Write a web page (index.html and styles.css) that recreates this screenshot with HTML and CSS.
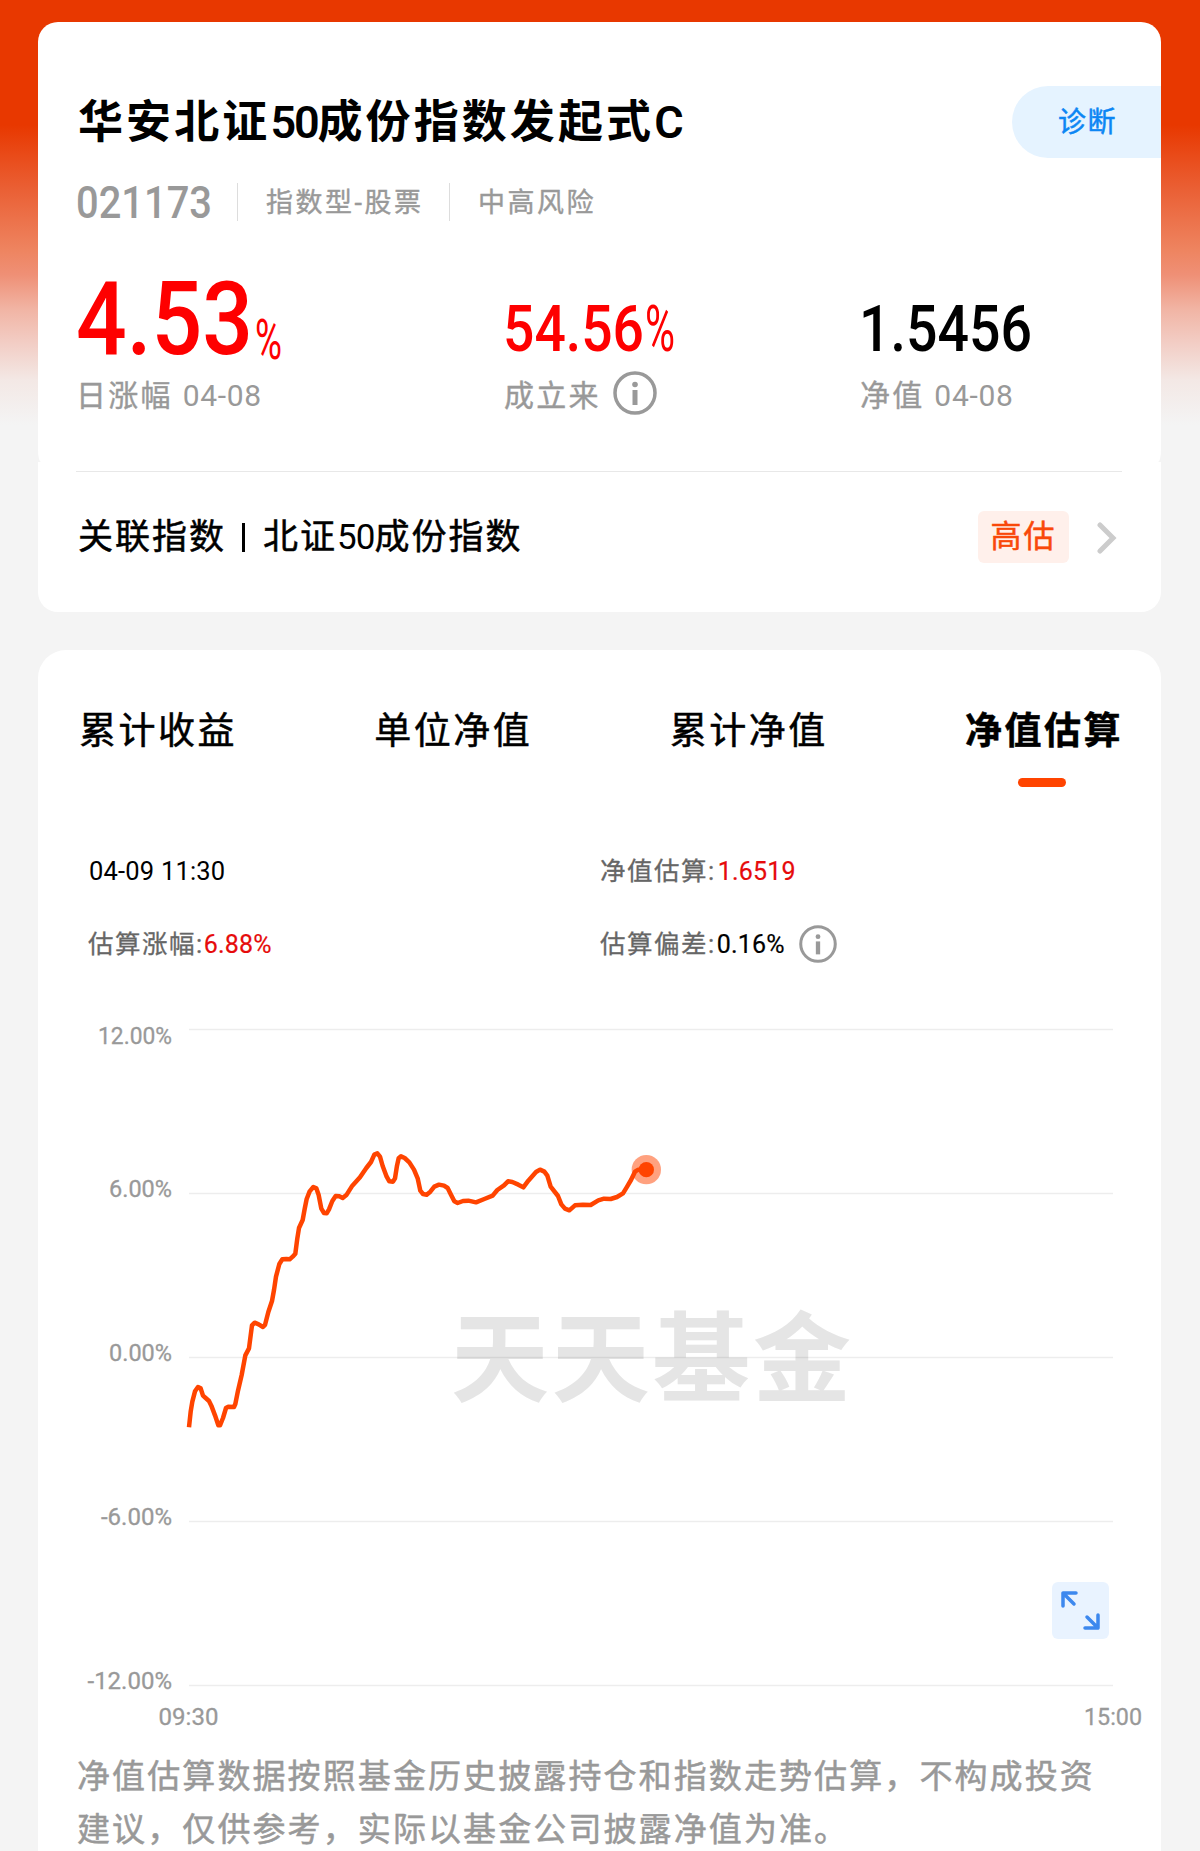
FILE: index.html
```html
<!DOCTYPE html>
<html lang="zh-CN">
<head>
  <meta charset="utf-8">
  <title>华安北证50成份指数发起式C</title>
  <link rel="stylesheet" href="styles.css">
</head>
<body>
  <div class="page">
    <div class="fund">
      <div class="fund-main">
        <div class="fund-head">
          <h1>华安北证<span class="num">50</span>成份指数发起式<span class="num">C</span></h1>
          <a class="diagnose">诊断</a>
        </div>
        <div class="tags">
          <svg class="code" width="136" height="38">
            <text x="0" y="35" textLength="136" lengthAdjust="spacingAndGlyphs">021173</text>
          </svg>
          <span class="tag type">指数型-股票</span>
          <span class="tag">中高风险</span>
        </div>
        <div class="stats">
          <div class="stat">
            <svg class="value red" width="220" height="90">
              <text class="big" x="0" y="80" textLength="177" lengthAdjust="spacingAndGlyphs">4.53</text>
              <text class="unit" x="179" y="85" textLength="27" lengthAdjust="spacingAndGlyphs">%</text>
            </svg>
            <div class="label"><span>日涨幅 <i>04-08</i></span></div>
          </div>
          <div class="stat">
            <svg class="value red" width="200" height="90">
              <text class="mid" x="-1" y="77" textLength="141" lengthAdjust="spacingAndGlyphs">54.56</text>
              <text class="mid thin" x="141" y="77" textLength="30" lengthAdjust="spacingAndGlyphs">%</text>
            </svg>
            <div class="label">
              <span>成立来</span>
              <svg class="info" width="44" height="44" viewBox="0 0 44 44">
                <circle cx="22" cy="22" r="20"/>
                <path d="M22 19v15"/>
                <circle class="dot" cx="22" cy="13.500" r="2.800"/>
              </svg>
            </div>
          </div>
          <div class="stat">
            <svg class="value" width="200" height="90">
              <text class="mid" x="-1" y="77" textLength="173" lengthAdjust="spacingAndGlyphs">1.5456</text>
            </svg>
            <div class="label"><span>净值 <i>04-08</i></span></div>
          </div>
        </div>
      </div>
      <div class="related">
        <div class="related-row">
          <span class="related-name">关联指数<b></b>北证<span class="num">50</span>成份指数</span>
          <span class="badge">高估</span>
          <svg class="arrow" width="20" height="34" viewBox="0 0 20 34">
            <path d="M3 4l13 13L3 30"/>
          </svg>
        </div>
      </div>
    </div>

    <div class="chart-card">
      <div class="tabs">
        <a>累计收益</a>
        <a>单位净值</a>
        <a>累计净值</a>
        <a class="active">净值估算</a>
      </div>
      <div class="estimate">
        <div class="time">04-09 11:30</div>
        <div><span>净值估算:</span><em class="first">1.6519</em></div>
        <div><span>估算涨幅:</span><em>6.88%</em></div>
        <div>
          <span>估算偏差:</span><em class="black">0.16%</em>
          <svg class="info" width="38" height="38" viewBox="0 0 44 44">
            <circle cx="22" cy="22" r="20"/>
            <path d="M22 19v15"/>
            <circle class="dot" cx="22" cy="13.500" r="2.800"/>
          </svg>
        </div>
      </div>

      <svg class="chart" width="1123" height="740" viewBox="38 1000 1123 740">
        <text class="watermark" x="451" y="1394" textLength="400">天天基金</text>
        <path class="grid" d="M189 1029.500H1113M189 1193.500H1113M189 1357.500H1113M189 1521.500H1113M189 1685.500H1113"/>
        <g class="axis" text-anchor="end">
          <text x="172" y="1044" textLength="74" lengthAdjust="spacingAndGlyphs">12.00%</text>
          <text x="172" y="1197" textLength="63" lengthAdjust="spacingAndGlyphs">6.00%</text>
          <text x="172" y="1361" textLength="63" lengthAdjust="spacingAndGlyphs">0.00%</text>
          <text x="172" y="1525">-6.00%</text>
          <text x="172" y="1689">-12.00%</text>
        </g>
        <g class="axis" text-anchor="middle">
          <text x="188.500" y="1725">09:30</text>
          <text x="1113" y="1725" textLength="58" lengthAdjust="spacingAndGlyphs">15:00</text>
        </g>
        <g transform="translate(170 1130) scale(.33333)">
          <path class="line" d="M57 892L62 845L67 815L75 784L84 771L92 775L99 797L107 804L117 813L124 827L135 856L145 886L150 886L159 864L168 834L175 830L192 831L196 822L204 782L215 735L226 676L237 655L246 586L254 578L266 583L279 591L285 585L295 546L306 513L312 480L318 440L328 402L337 388L349 387L359 388L368 380L376 371L382 325L387 294L398 270L404 237L410 207L419 184L430 171L439 175L446 195L454 236L462 249L470 250L477 238L487 213L497 198L508 199L518 204L530 194L547 167L570 142L589 114L603 96L613 74L622 70L630 80L638 108L650 140L658 154L669 155L675 145L681 107L686 85L693 79L704 84L718 97L732 119L743 145L751 182L759 192L770 194L781 185L793 170L807 164L822 167L833 174L843 194L853 214L863 219L879 213L895 212L918 217L943 207L968 197L982 180L1002 166L1014 154L1027 156L1045 164L1060 172L1075 152L1098 126L1110 119L1123 125L1132 137L1142 170L1164 198L1174 223L1185 236L1198 241L1215 226L1239 224L1262 225L1285 211L1302 206L1322 207L1341 201L1359 190L1370 172L1383 150L1395 125L1405 119L1429 119"/>
          <circle class="halo" cx="1429" cy="119" r="44"/>
          <circle class="point" cx="1429" cy="119" r="23"/>
        </g>
        <rect class="zoom-bg" x="1052" y="1582" width="57" height="57" rx="6"/>
        <path class="zoom-icon" d="M1076 1593H1063V1606M1063 1593L1074 1604M1098 1615V1628H1085M1098 1628L1087 1617"/>
      </svg>

      <p class="note">净值估算数据按照基金历史披露持仓和指数走势估算，不构成投资建议，仅供参考，实际以基金公司披露净值为准。</p>
    </div>
  </div>
</body>
</html>
```
FILE: styles.css
```css
body {
  margin: 0;
  background-color: #f4f4f4;
  font-family: Roboto, "Noto Sans CJK SC", sans-serif;
  color: #000;
}

.page {
  height: 1851px;
  box-sizing: border-box;
  padding: 22px 39px 0 38px;
  overflow: hidden;
  background: linear-gradient(#e83800 0, #e83800 125px, #ea6035 190px, #ee8460 250px, #ef9076 275px, #f1b5a5 310px, #f2cbc2 340px, #f3e8e5 380px, #f4f4f4 425px);
}

/* fund header */
.fund-main {
  height: 440px;
  box-sizing: border-box;
  padding: 64px 0 0 38px;
  border-radius: 20px 20px 3px 3px / 20px 20px 12px 12px;
  background-color: #fff;
}

.fund-head {
  display: flex;
  justify-content: space-between;
  height: 72px;
}

h1 {
  margin: 0 0 0 2px;
  font-size: 45px;
  line-height: 73px;
  font-weight: 700;
  letter-spacing: 3.1px;
}

h1 .num {
  font-weight: 600;
  letter-spacing: -2.2px;
}

.diagnose {
  width: 149px;
  box-sizing: border-box;
  padding: 2px 0 0 46px;
  border-radius: 36px 0 0 36px;
  background-color: #e5f3ff;
  color: #0c86f4;
  font-size: 28px;
  line-height: 70px;
  letter-spacing: 1.5px;
  -webkit-text-stroke: .5px;
}

.tags {
  display: flex;
  margin-top: 25px;
  height: 38px;
}

.code {
  overflow: visible;
}

.code text {
  font-size: 45px;
  font-weight: 500;
  fill: #999;
}

.tag {
  margin-left: 25px;
  padding-left: 28px;
  border-left: 1px solid #ddd;
  color: #999;
  font-size: 27px;
  line-height: 40px;
  letter-spacing: 2.5px;
  -webkit-text-stroke: .4px;
}

.type {
  width: 158px;
}

.stats {
  display: grid;
  grid-template-columns: 428px 356px 1fr;
  margin-top: 53px;
}

.value {
  display: block;
  overflow: visible;
}

.value text {
  font-weight: 500;
}

.red text {
  fill: #fe0000;
}

.value .big {
  font-size: 102px;
}

.value .unit {
  font-size: 55px;
  font-weight: 400;
}

.value .mid {
  font-size: 64px;
}

.value .thin {
  font-weight: 400;
}

.label {
  display: flex;
  gap: 12px;
  height: 48px;
  margin-top: 7px;
  color: #999;
  font-size: 30px;
  line-height: 50px;
  letter-spacing: 2.3px;
  -webkit-text-stroke: .4px;
}

.label i {
  font-style: normal;
  letter-spacing: .7px;
  -webkit-text-stroke: 0;
}

.info {
  fill: none;
  stroke: #999;
  stroke-width: 3.5;
}

.info path {
  stroke-width: 5;
}

.info .dot {
  fill: #999;
  stroke: none;
}

.related {
  height: 150px;
  box-sizing: border-box;
  padding: 9px 39px 0 38px;
  border-radius: 0 0 20px 20px;
  background-color: #fff;
}

.related-row {
  display: flex;
  align-items: center;
  height: 131px;
  border-top: 1px solid #e8e8e8;
}

.related-name {
  flex: 1;
  padding-left: 2px;
  font-size: 35px;
  line-height: 50px;
  letter-spacing: 2px;
  -webkit-text-stroke: .5px;
}

.related-name b {
  display: inline-block;
  width: 3px;
  height: 29px;
  margin: 0 18px 0 16px;
  background-color: #000;
  vertical-align: -3px;
}

.related-name .num {
  letter-spacing: -1px;
  -webkit-text-stroke: 0;
}

.badge {
  width: 91px;
  height: 52px;
  margin-bottom: 2px;
  border-radius: 6px;
  background-color: #fff0eb;
  color: #f9480a;
  font-size: 31px;
  line-height: 52px;
  letter-spacing: 2px;
  text-align: center;
  -webkit-text-stroke: .5px;
}

.arrow {
  margin: 0 5px 0 28px;
  fill: none;
  stroke: #ccc;
  stroke-width: 5;
  stroke-linecap: round;
}

/* chart card */
.chart-card {
  height: 1300px;
  margin-top: 38px;
  border-radius: 28px;
  background-color: #fff;
}

.tabs {
  display: flex;
  justify-content: space-between;
  padding: 52px 38px 0 41px;
}

.tabs a {
  height: 85px;
  font-size: 37px;
  line-height: 59px;
  letter-spacing: 2.5px;
  -webkit-text-stroke: .5px;
}

.tabs .active {
  font-weight: 700;
}

.tabs .active::after {
  content: "";
  display: block;
  width: 48px;
  height: 9px;
  margin: 17px 0 0 53px;
  border-radius: 5px;
  background-color: #ff4400;
}

.estimate {
  display: grid;
  grid-template-columns: 512px 1fr;
  grid-auto-rows: 73px;
  margin-top: 47px;
  padding-left: 50px;
  height: 166px;
}

.estimate div {
  display: flex;
  align-items: center;
  height: 74px;
}

.estimate .time {
  padding-left: 1px;
  font-size: 25.5px;
  letter-spacing: .2px;
}

.estimate span {
  margin-top: -5px;
  color: #666;
  font-size: 25.5px;
  letter-spacing: 1.5px;
  -webkit-text-stroke: .3px;
}

.estimate em {
  font-style: normal;
  font-size: 25px;
  letter-spacing: .2px;
  color: #e60b0b;
  -webkit-text-stroke: .2px;
}

.estimate .first {
  padding-left: 2px;
}

.estimate .black {
  padding-left: 1px;
  color: #000;
}

.estimate .info {
  margin-left: 14px;
}

.chart {
  display: block;
}

.grid {
  stroke: #000;
  stroke-opacity: .07;
  stroke-width: 1.5;
}

.axis text {
  font-size: 24px;
  fill: #999;
  stroke: #999;
  stroke-width: .3;
}

.watermark {
  font-family: "Noto Sans CJK SC", sans-serif;
  font-size: 98px;
  font-weight: 700;
  fill: #e5e5e5;
}

.line {
  fill: none;
  stroke: #ff4400;
  stroke-width: 13.5;
  stroke-linejoin: round;
}

.halo {
  fill: #ff4400;
  opacity: .5;
}

.point {
  fill: #ff4400;
}

.zoom-bg {
  fill: #e9f3ff;
}

.zoom-icon {
  fill: none;
  stroke: #3d88ee;
  stroke-width: 3.5;
  stroke-linecap: round;
  stroke-linejoin: round;
}

.note {
  margin: 10px 38px 0 39px;
  color: #999;
  font-size: 33px;
  line-height: 53px;
  letter-spacing: 2.1px;
  -webkit-text-stroke: .5px;
}
```
